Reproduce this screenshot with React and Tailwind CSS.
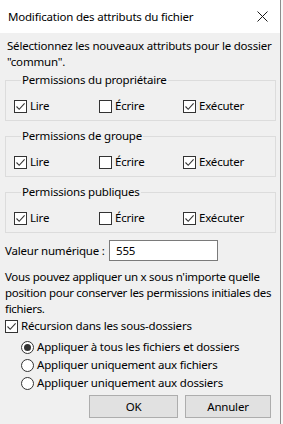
import { useState } from 'react'

const font = { fontFamily: '"Segoe UI", "Noto Sans", "Open Sans", sans-serif' }

function CheckBox({ checked, label, className = '' }) {
  return (
    <label className={`flex items-center h-[16px] ${className}`}>
      <span className="w-[13px] h-[13px] border border-[#333333] bg-white flex items-center justify-center shrink-0">
        {checked && (
          <svg width="11" height="11" viewBox="0 0 11 11">
            <path d="M1.5 5.5 L4.2 8.3 L9.6 2.4" fill="none" stroke="#333333" strokeWidth="1.1" />
          </svg>
        )}
      </span>
      <span className="ml-[3px] whitespace-nowrap">{label}</span>
    </label>
  )
}

function Radio({ checked, label }) {
  return (
    <label className="flex items-center h-[18px] pl-[16px]">
      <span className="w-[13px] h-[13px] rounded-full border border-[#333333] bg-white flex items-center justify-center shrink-0">
        {checked && <span className="w-[7px] h-[7px] rounded-full bg-[#333333]" />}
      </span>
      <span className="ml-[3px] whitespace-nowrap">{label}</span>
    </label>
  )
}

function Group({ title, perms }) {
  return (
    <fieldset className="border border-[#dcdcdc] pl-[8px] pt-[10px] pb-[6px]">
      <legend className="ml-[7px] px-[1px] leading-[16px]">{title}</legend>
      <div className="flex">
        <CheckBox checked={perms[0]} label="Lire" className="w-[85px]" />
        <CheckBox checked={perms[1]} label="Écrire" className="w-[84px]" />
        <CheckBox checked={perms[2]} label="Exécuter" />
      </div>
    </fieldset>
  )
}

export default function App() {
  const [value, setValue] = useState('555')

  return (
    <div className="w-[283px] h-[424px] flex text-[11.5px] tracking-[-0.2px] text-black leading-[16px]" style={font}>
      <div className="w-[281px] h-full flex flex-col border-r border-[#8c8c8c] bg-[#f0f0f0]">
        {/* Title bar */}
        <div className="h-[33px] bg-white flex items-center justify-between pl-[8px] pr-[12px] shrink-0">
          <span>Modification des attributs du fichier</span>
          <svg width="11" height="11" viewBox="0 0 11 11">
            <path d="M0.5 0.5 L10.5 10.5 M10.5 0.5 L0.5 10.5" stroke="#1a1a1a" strokeWidth="1" />
          </svg>
        </div>

        <div className="flex flex-col px-[5px] pr-[3px]">
          <p className="mt-[5px] pl-[2px]">
            Sélectionnez les nouveaux attributs pour le dossier "commun".
          </p>

          <div className="mt-[2px] pr-[1px]">
            <Group title="Permissions du propriétaire" perms={[true, false, true]} />
          </div>
          <div className="mt-[7px] pr-[1px]">
            <Group title="Permissions de groupe" perms={[true, false, true]} />
          </div>
          <div className="mt-[7px] pr-[1px]">
            <Group title="Permissions publiques" perms={[true, false, true]} />
          </div>

          <div className="mt-[7px] flex items-center">
            <span className="w-[104px] whitespace-nowrap">Valeur numérique :</span>
            <input
              value={value}
              onChange={(e) => setValue(e.target.value)}
              className="w-[109px] h-[21px] border border-[#7a7a7a] bg-white px-[6px] outline-none text-[11.5px]"
              style={font}
            />
          </div>

          <p className="mt-[8px] tracking-[-0.3px]">
            Vous pouvez appliquer un x sous n'importe quelle position pour conserver les permissions initiales des fichiers.
          </p>

          <CheckBox checked label="Récursion dans les sous-dossiers" className="mt-[1px]" />

          <div className="mt-[4px] flex flex-col">
            <Radio checked label="Appliquer à tous les fichiers et dossiers" />
            <Radio label="Appliquer uniquement aux fichiers" />
            <Radio label="Appliquer uniquement aux dossiers" />
          </div>

          <div className="mt-[3px] flex justify-end gap-[7px] pr-[6px]">
            <button className="w-[89px] h-[23px] bg-[#e1e1e1] border border-[#adadad]">OK</button>
            <button className="w-[86px] h-[23px] bg-[#e1e1e1] border border-[#adadad]">Annuler</button>
          </div>
        </div>
      </div>
      <div className="flex-1 bg-[#f7f7f7]" />
    </div>
  )
}
